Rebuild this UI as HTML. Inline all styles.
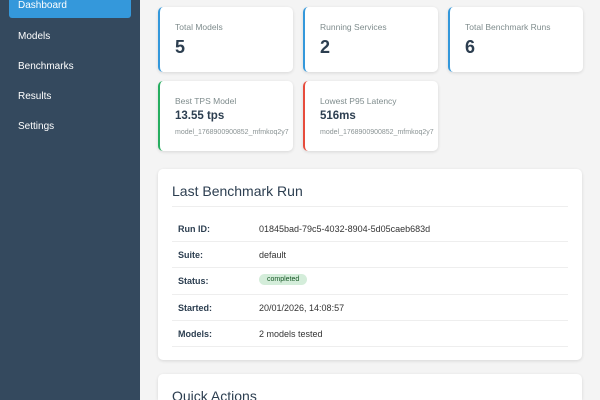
<!DOCTYPE html>
<html style="overflow:hidden"><head><meta charset="utf-8"><style>
*{box-sizing:border-box;margin:0;padding:0}
html,body{width:600px;height:400px;overflow:hidden}
body{background:#f4f4f4;font-family:"Liberation Sans",sans-serif;position:relative}
.sb{position:absolute;left:0;top:0;width:140px;height:400px;background:#34495e}
.nav{position:absolute;left:9px;width:122px;height:28px;color:#fff;font-size:10px;padding-left:9px;line-height:28px}
.act{background:#3498db;border-radius:3px}
.card{position:absolute;background:#fff;border-radius:5px;box-shadow:0 1px 3px rgba(0,0,0,.12)}
.stat{width:135px;padding-left:15px}
.lbl{position:absolute;left:15px;top:15px;font-size:8.5px;color:#7f8c8d}
.big{position:absolute;left:15px;top:30px;font-size:18px;font-weight:bold;color:#2c3e50}
.mid{position:absolute;left:15px;top:29px;font-size:11.5px;font-weight:bold;color:#2c3e50}
.sub{position:absolute;left:15px;top:48px;font-size:7px;color:#8a9394;white-space:nowrap}
.row{position:absolute;left:172px;width:396px;height:26px;border-bottom:1px solid #eee;font-size:9px;color:#333}
.row b{position:absolute;left:6px;top:8px;color:#2c3e50}
.row span{position:absolute;left:87px;top:8px}
</style></head><body>
<div class="sb">
<div class="nav act" style="top:-10px;line-height:32px;height:28px">Dashboard</div>
<div class="nav" style="top:23px">Models</div>
<div class="nav" style="top:53px">Benchmarks</div>
<div class="nav" style="top:83px">Results</div>
<div class="nav" style="top:113px">Settings</div>
</div>
<div class="card stat" style="left:158px;top:7px;height:65px;border-left:2px solid #3498db"><div class="lbl">Total Models</div><div class="big">5</div></div>
<div class="card stat" style="left:303px;top:7px;height:65px;border-left:2px solid #3498db"><div class="lbl">Running Services</div><div class="big">2</div></div>
<div class="card stat" style="left:448px;top:7px;height:65px;border-left:2px solid #3498db"><div class="lbl">Total Benchmark Runs</div><div class="big">6</div></div>
<div class="card stat" style="left:158px;top:81px;height:70px;border-left:2px solid #27ae60"><div class="lbl">Best TPS Model</div><div class="mid">13.55 tps</div><div class="sub">model_1768900900852_mfmkoq2y7</div></div>
<div class="card stat" style="left:303px;top:81px;height:70px;border-left:2px solid #e74c3c"><div class="lbl">Lowest P95 Latency</div><div class="mid">516ms</div><div class="sub">model_1768900900852_mfmkoq2y7</div></div>
<div class="card" style="left:158px;top:169px;width:424px;height:191px"></div>
<div style="position:absolute;left:172px;top:183px;font-size:14px;color:#2c3e50">Last Benchmark Run</div>
<div style="position:absolute;left:172px;top:206px;width:396px;border-top:1px solid #eee"></div>
<div class="row" style="top:216px"><b>Run ID:</b><span>01845bad-79c5-4032-8904-5d05caeb683d</span></div>
<div class="row" style="top:242px"><b>Suite:</b><span>default</span></div>
<div class="row" style="top:268px;height:27px"><b>Status:</b><span style="top:6px;left:87px;background:#d4edda;color:#155724;font-size:7px;padding:2px 8px;border-radius:8px">completed</span></div>
<div class="row" style="top:295px"><b>Started:</b><span>20/01/2026, 14:08:57</span></div>
<div class="row" style="top:321px"><b>Models:</b><span>2 models tested</span></div>
<div class="card" style="left:158px;top:374px;width:424px;height:26px;border-radius:5px 5px 0 0"></div>
<div style="position:absolute;left:172px;top:388px;font-size:14px;color:#2c3e50">Quick Actions</div>
</body></html>
